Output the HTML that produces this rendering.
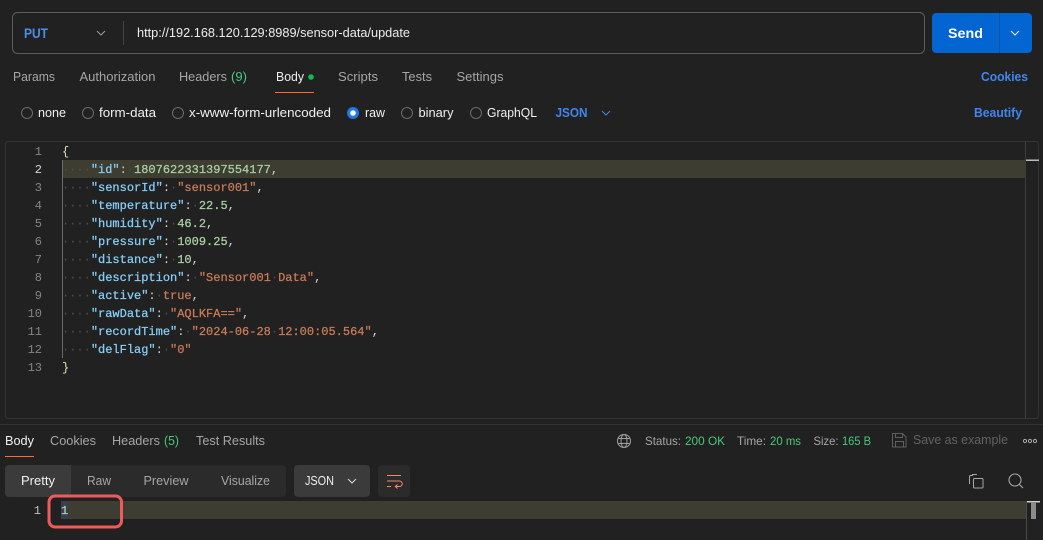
<!DOCTYPE html>
<html><head><meta charset="utf-8">
<style>
html,body{margin:0;padding:0;background:#212121;width:1043px;height:540px;overflow:hidden}
svg{display:block}
text{font-family:"Liberation Sans",sans-serif;font-size:13px;white-space:pre}
.g{fill:#a6a6a6}.w{fill:#f0f0f0}.b{fill:#3f87ee}.gr{fill:#47c97a}
.m{font-family:"Liberation Mono",monospace;font-size:12px;fill:#d4d4d4}
.k{fill:#86cff8;stroke:#86cff8;stroke-width:.25px}.n{fill:#aad0a2;stroke:#aad0a2;stroke-width:.25px}.s{fill:#c97b58;stroke:#c97b58;stroke-width:.25px}.d{fill:#4e4e4e}.ln{font-family:"Liberation Mono",monospace;font-size:12px;fill:#858585;text-anchor:end}
.sm{font-size:12px}
</style></head><body>
<svg width="1043" height="540" viewBox="0 0 1043 540" xmlns="http://www.w3.org/2000/svg">
<rect width="1043" height="540" fill="#212121"/>
<rect x="12.5" y="12.5" width="912" height="41" rx="5" fill="none" stroke="#5c5c5c"/>
<text x="24" y="38" textLength="24" lengthAdjust="spacingAndGlyphs" font-weight="bold" style="font-size:13.5px" fill="#4c8fe8">PUT</text>
<path d="M97 31l4 4 4-4" fill="none" stroke="#9a9a9a"/>
<rect x="123" y="21" width="1" height="24" fill="#444"/>
<text x="137" y="37" textLength="273" lengthAdjust="spacingAndGlyphs" fill="#ececec">http://192.168.120.129:8989/sensor-data/update</text>
<rect x="932" y="13" width="100" height="40" rx="4" fill="#0265d2"/>
<rect x="999" y="13" width="1" height="40" fill="#0a4f9e"/>
<text x="948" y="38" textLength="35" lengthAdjust="spacingAndGlyphs" font-weight="bold" style="font-size:14px" fill="#fff">Send</text>
<path d="M1011 31l4 4 4-4" fill="none" stroke="#e8f0fb"/>

<text class="g" x="13" y="81" textLength="42" lengthAdjust="spacingAndGlyphs">Params</text>
<text class="g" x="79.5" y="81" textLength="76" lengthAdjust="spacingAndGlyphs">Authorization</text>
<text class="g" x="179" y="81" textLength="48" lengthAdjust="spacingAndGlyphs">Headers</text>
<text class="gr" x="231" y="81" textLength="16" lengthAdjust="spacingAndGlyphs">(9)</text>
<text class="w" x="276" y="81" textLength="28" lengthAdjust="spacingAndGlyphs">Body</text>
<circle cx="311" cy="77" r="2.8" fill="#0cbb52"/>
<rect x="275" y="92" width="39" height="1" fill="#ff6c37"/>
<text class="g" x="338" y="81" textLength="40" lengthAdjust="spacingAndGlyphs">Scripts</text>
<text class="g" x="402" y="81" textLength="30" lengthAdjust="spacingAndGlyphs">Tests</text>
<text class="g" x="456.5" y="81" textLength="47" lengthAdjust="spacingAndGlyphs">Settings</text>
<text class="b" x="981" y="81" textLength="47" lengthAdjust="spacingAndGlyphs" font-weight="bold" style="font-size:12.5px">Cookies</text>

<g fill="none" stroke="#6b6b6b">
<circle cx="27" cy="113" r="5.5"/><circle cx="88" cy="113" r="5.5"/><circle cx="178" cy="113" r="5.5"/><circle cx="407" cy="113" r="5.5"/><circle cx="476" cy="113" r="5.5"/>
</g>
<circle cx="353" cy="113" r="6" fill="#1d78e8"/><circle cx="353" cy="113" r="2.8" fill="#fff"/>
<text class="w" x="38" y="117" textLength="28" lengthAdjust="spacingAndGlyphs">none</text>
<text class="w" x="99" y="117" textLength="57" lengthAdjust="spacingAndGlyphs">form-data</text>
<text class="w" x="189" y="117" textLength="142" lengthAdjust="spacingAndGlyphs">x-www-form-urlencoded</text>
<text class="w" x="365" y="117" textLength="20" lengthAdjust="spacingAndGlyphs">raw</text>
<text class="w" x="418.5" y="117" textLength="35" lengthAdjust="spacingAndGlyphs">binary</text>
<text class="w" x="487" y="117" textLength="50" lengthAdjust="spacingAndGlyphs">GraphQL</text>
<text class="b" x="555.5" y="117" textLength="32" lengthAdjust="spacingAndGlyphs" font-weight="bold" style="font-size:12.5px">JSON</text>
<path d="M602 111l4 4 4-4" fill="none" stroke="#3f87ee"/>
<text class="b" x="974" y="117" textLength="48" lengthAdjust="spacingAndGlyphs" font-weight="bold" style="font-size:12.5px">Beautify</text>

<rect x="5.5" y="141.5" width="1033" height="277" rx="3" fill="none" stroke="#333"/>
<rect x="1025" y="142" width="1" height="276" fill="#3c3c3c"/>
<rect x="63" y="160" width="962" height="18" fill="#3d3d31"/>
<rect x="1026" y="159.5" width="13" height="1.5" fill="#bbb"/>
<rect x="62" y="160" width="1" height="198" fill="#6a6a6a"/>

<g class="lns">
<text class="ln" x="42" y="155">1</text>
<text class="ln" x="42" y="173" style="fill:#d8d8d8">2</text>
<text class="ln" x="42" y="191">3</text>
<text class="ln" x="42" y="209">4</text>
<text class="ln" x="42" y="227">5</text>
<text class="ln" x="42" y="245">6</text>
<text class="ln" x="42" y="263">7</text>
<text class="ln" x="42" y="281">8</text>
<text class="ln" x="42" y="299">9</text>
<text class="ln" x="42" y="317">10</text>
<text class="ln" x="42" y="335">11</text>
<text class="ln" x="42" y="353">12</text>
<text class="ln" x="42" y="371">13</text>
</g>
<g>
<text class="m" x="62" y="155" style="fill:#e8e0b8">{</text>
<text class="m" x="62" y="173"><tspan class="d">····</tspan><tspan class="k">"id"</tspan>:<tspan class="d">·</tspan><tspan class="n">1807622331397554177</tspan>,</text>
<text class="m" x="62" y="191"><tspan class="d">····</tspan><tspan class="k">"sensorId"</tspan>:<tspan class="d">·</tspan><tspan class="s">"sensor001"</tspan>,</text>
<text class="m" x="62" y="209"><tspan class="d">····</tspan><tspan class="k">"temperature"</tspan>:<tspan class="d">·</tspan><tspan class="n">22.5</tspan>,</text>
<text class="m" x="62" y="227"><tspan class="d">····</tspan><tspan class="k">"humidity"</tspan>:<tspan class="d">·</tspan><tspan class="n">46.2</tspan>,</text>
<text class="m" x="62" y="245"><tspan class="d">····</tspan><tspan class="k">"pressure"</tspan>:<tspan class="d">·</tspan><tspan class="n">1009.25</tspan>,</text>
<text class="m" x="62" y="263"><tspan class="d">····</tspan><tspan class="k">"distance"</tspan>:<tspan class="d">·</tspan><tspan class="n">10</tspan>,</text>
<text class="m" x="62" y="281"><tspan class="d">····</tspan><tspan class="k">"description"</tspan>:<tspan class="d">·</tspan><tspan class="s">"Sensor001</tspan><tspan class="d">·</tspan><tspan class="s">Data"</tspan>,</text>
<text class="m" x="62" y="299"><tspan class="d">····</tspan><tspan class="k">"active"</tspan>:<tspan class="d">·</tspan><tspan class="s">true</tspan>,</text>
<text class="m" x="62" y="317"><tspan class="d">····</tspan><tspan class="k">"rawData"</tspan>:<tspan class="d">·</tspan><tspan class="s">"AQLKFA=="</tspan>,</text>
<text class="m" x="62" y="335"><tspan class="d">····</tspan><tspan class="k">"recordTime"</tspan>:<tspan class="d">·</tspan><tspan class="s">"2024-06-28</tspan><tspan class="d">·</tspan><tspan class="s">12:00:05.564"</tspan>,</text>
<text class="m" x="62" y="353"><tspan class="d">····</tspan><tspan class="k">"delFlag"</tspan>:<tspan class="d">·</tspan><tspan class="s">"0"</tspan></text>
<text class="m" x="62" y="371" style="fill:#e8e0b8">}</text>
</g>

<rect x="0" y="424" width="1043" height="1" fill="#333"/>
<text class="w" x="5" y="445" textLength="29" lengthAdjust="spacingAndGlyphs">Body</text>
<rect x="5" y="456" width="29" height="1" fill="#ff6c37"/>
<text class="g" x="50" y="445" textLength="46" lengthAdjust="spacingAndGlyphs">Cookies</text>
<text class="g" x="112" y="445" textLength="48" lengthAdjust="spacingAndGlyphs">Headers</text>
<text class="gr" x="164" y="445" textLength="15" lengthAdjust="spacingAndGlyphs">(5)</text>
<text class="g" x="196" y="445" textLength="69" lengthAdjust="spacingAndGlyphs">Test Results</text>

<g fill="none" stroke="#a0a0a0">
<circle cx="624" cy="441" r="6.5"/><ellipse cx="624" cy="441" rx="3" ry="6.5"/><path d="M618 438.5h12M618 443.5h12"/>
</g>
<text class="g sm" x="645" y="445" textLength="36" lengthAdjust="spacingAndGlyphs">Status:</text>
<text class="gr sm" x="685" y="445" textLength="40" lengthAdjust="spacingAndGlyphs">200 OK</text>
<text class="g sm" x="737" y="445" textLength="29" lengthAdjust="spacingAndGlyphs">Time:</text>
<text class="gr sm" x="770" y="445" textLength="31" lengthAdjust="spacingAndGlyphs">20 ms</text>
<text class="g sm" x="813.5" y="445" textLength="25" lengthAdjust="spacingAndGlyphs">Size:</text>
<text class="gr sm" x="842" y="445" textLength="29" lengthAdjust="spacingAndGlyphs">165 B</text>
<g fill="none" stroke="#5f5f5f"><path d="M892.5 433.5h10l3.5 3.5v10h-13.5z"/><path d="M895.5 433.5v4h7v-4M895.5 447v-5.5h8v5.500"/></g>
<text x="913" y="444" textLength="95" lengthAdjust="spacingAndGlyphs" fill="#626262">Save as example</text>
<g fill="none" stroke="#a8a8a8"><circle cx="1025" cy="441" r="1.6"/><circle cx="1030" cy="441" r="1.6"/><circle cx="1035" cy="441" r="1.6"/></g>

<rect x="5" y="465" width="281" height="32" rx="4" fill="#2b2b2b"/>
<path d="M71 465H9a4 4 0 0 0-4 4v24a4 4 0 0 0 4 4h62z" fill="#3b3b3b"/>
<text class="w" x="21" y="485" textLength="34" lengthAdjust="spacingAndGlyphs">Pretty</text>
<text class="g" x="87" y="485" textLength="24" lengthAdjust="spacingAndGlyphs">Raw</text>
<text class="g" x="143.5" y="485" textLength="45" lengthAdjust="spacingAndGlyphs">Preview</text>
<text class="g" x="221" y="485" textLength="49" lengthAdjust="spacingAndGlyphs">Visualize</text>
<rect x="294" y="465" width="76" height="32" rx="4" fill="#3b3b3b"/>
<text class="w" x="305" y="485" textLength="29" lengthAdjust="spacingAndGlyphs" style="font-size:12.5px">JSON</text>
<path d="M348 479l4 4 4-4" fill="none" stroke="#d8d8d8"/>
<rect x="378" y="465" width="32" height="32" rx="4" fill="#2b2b2b"/>
<g fill="none" stroke="#f08a68"><path d="M387 475.500h14M387 481h12.500a2.500 2.500 0 0 1 0 5.500h-4M387 486.500h4"/><path d="M397.500 484.500l-2.200 2 2.200 2"/></g>
<g fill="none" stroke="#a8a8a8"><rect x="973.500" y="478.500" width="9.500" height="9.500" rx="1"/><path d="M973 475.500h-2.500a1 1 0 0 0-1 1v7.500"/><path d="M972 474.500h5"/></g>
<g fill="none" stroke="#a8a8a8" stroke-width="1.100"><circle cx="1015" cy="480" r="6"/><path d="M1019.500 484.500l3.500 3.500"/></g>

<rect x="61" y="501" width="966" height="18" fill="#3d3d31"/>
<rect x="61" y="501" width="7" height="18" fill="#3c3c52"/>
<text class="ln" x="41" y="514" style="fill:#c0c0c0">1</text>
<text class="m n" x="61" y="514">1</text>
<rect x="1027" y="501" width="13" height="1.500" fill="#d0d0d0"/>
<rect x="1031" y="502" width="5" height="17" fill="#8c8c8c"/>
<rect x="1026" y="501" width="1" height="39" fill="#4a4a4a"/>
<rect x="49" y="496" width="72.500" height="31" rx="6" fill="none" stroke="#ee5b5b" stroke-width="3"/>
</svg>
</body></html>
